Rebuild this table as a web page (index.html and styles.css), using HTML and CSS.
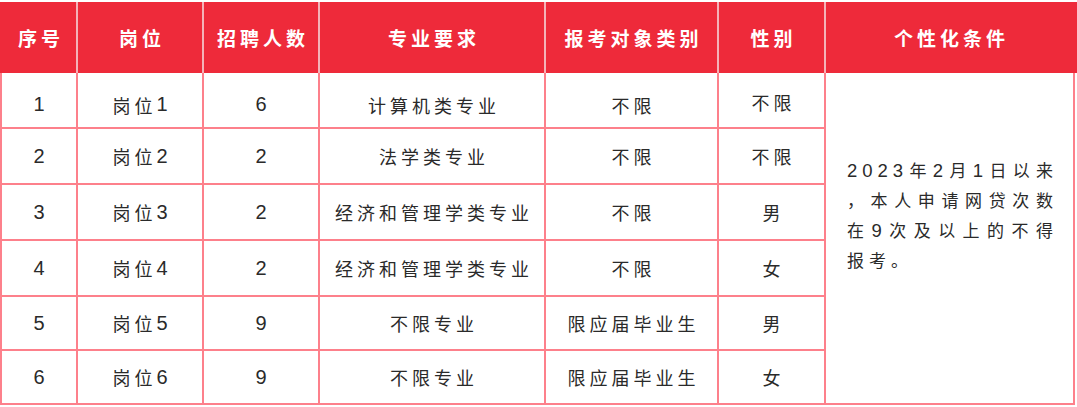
FILE: index.html
```html
<!DOCTYPE html>
<html lang="zh-CN">
<head>
<meta charset="utf-8">
<title>岗位表</title>
<link rel="stylesheet" href="styles.css">
</head>
<body>
<div class="jobs">
  <div class="head">
    <div class="hcell">序号</div>
    <div class="hcell">岗位</div>
    <div class="hcell">招聘人数</div>
    <div class="hcell">专业要求</div>
    <div class="hcell">报考对象类别</div>
    <div class="hcell">性别</div>
    <div class="hcell">个性化条件</div>
  </div>
  <div class="body">
    <div class="cell first num">1</div>
    <div class="cell first">岗位<span class="num">1</span></div>
    <div class="cell first num">6</div>
    <div class="cell first">计算机类专业</div>
    <div class="cell first">不限</div>
    <div class="cell first-sex">不限</div>
    <div class="cell cond">
      <div class="cond-text">
        <span class="line just"><span class="num">2023</span>年<span class="num">2</span>月<span class="num">1</span>日以来</span>
        <span class="line just">，本人申请网贷次数</span>
        <span class="line just">在<span class="num">9</span>次及以上的不得</span>
        <span class="line">报考。</span>
      </div>
    </div>

    <div class="cell num">2</div>
    <div class="cell">岗位<span class="num">2</span></div>
    <div class="cell num">2</div>
    <div class="cell">法学类专业</div>
    <div class="cell">不限</div>
    <div class="cell">不限</div>

    <div class="cell num">3</div>
    <div class="cell">岗位<span class="num">3</span></div>
    <div class="cell num">2</div>
    <div class="cell">经济和管理学类专业</div>
    <div class="cell">不限</div>
    <div class="cell">男</div>

    <div class="cell num">4</div>
    <div class="cell">岗位<span class="num">4</span></div>
    <div class="cell num">2</div>
    <div class="cell">经济和管理学类专业</div>
    <div class="cell">不限</div>
    <div class="cell">女</div>

    <div class="cell num">5</div>
    <div class="cell">岗位<span class="num">5</span></div>
    <div class="cell num">9</div>
    <div class="cell">不限专业</div>
    <div class="cell">限应届毕业生</div>
    <div class="cell">男</div>

    <div class="cell num">6</div>
    <div class="cell">岗位<span class="num">6</span></div>
    <div class="cell num">9</div>
    <div class="cell">不限专业</div>
    <div class="cell">限应届毕业生</div>
    <div class="cell">女</div>
  </div>
</div>
</body>
</html>
```

FILE: styles.css
```css
html, body {
  margin: 0;
  padding: 0;
  background: #ffffff;
}

body {
  font-family: "Liberation Sans", "Noto Sans CJK SC", sans-serif;
}

.jobs {
  padding-top: 2px;
  width: 1077px;
}

.head,
.body {
  display: grid;
  grid-template-columns: 74px 124px 114px 224px 171px 105px 247px;
  column-gap: 2px;
}

.head {
  height: 71px;
  background: #f4b2b8;
  border-left: 2px solid #ee2a3a;
  border-right: 4px solid #ee2a3a;
  width: 1071px;
}

.hcell {
  display: flex;
  align-items: center;
  justify-content: center;
  padding-left: 4px;
  background: #ee2a3a;
  color: #ffffff;
  font-size: 19px;
  font-weight: bold;
  letter-spacing: 4px;
}

.body {
  width: 1071px;
  grid-template-rows: 54px 54px 54px 54px 52px 52px;
  row-gap: 2px;
  background: #fd808b;
  border: 2px solid #fd808b;
  border-top: 0;
}

.cell {
  display: flex;
  align-items: center;
  justify-content: center;
  padding-left: 4px;
  background: #ffffff;
  color: #2a2a2a;
  font-size: 18px;
  letter-spacing: 4px;
}

.cell.num,
.cell .num {
  font-size: 20px;
}

.cell.first { padding-top: 9px; }
.cell.first-sex { padding-top: 4px; }

.cell.cond {
  grid-column: 7;
  grid-row: 1 / span 6;
  display: block;
  padding: 83px 0 0 21px;
}

.cond-text {
  width: 211px;
  font-size: 17px;
  line-height: 29.5px;
  letter-spacing: 5px;
}

.cell.cond .num {
  font-size: 18.5px;
}

.line {
  display: block;
}

.line.just {
  text-align: justify;
  text-align-last: justify;
}
```
